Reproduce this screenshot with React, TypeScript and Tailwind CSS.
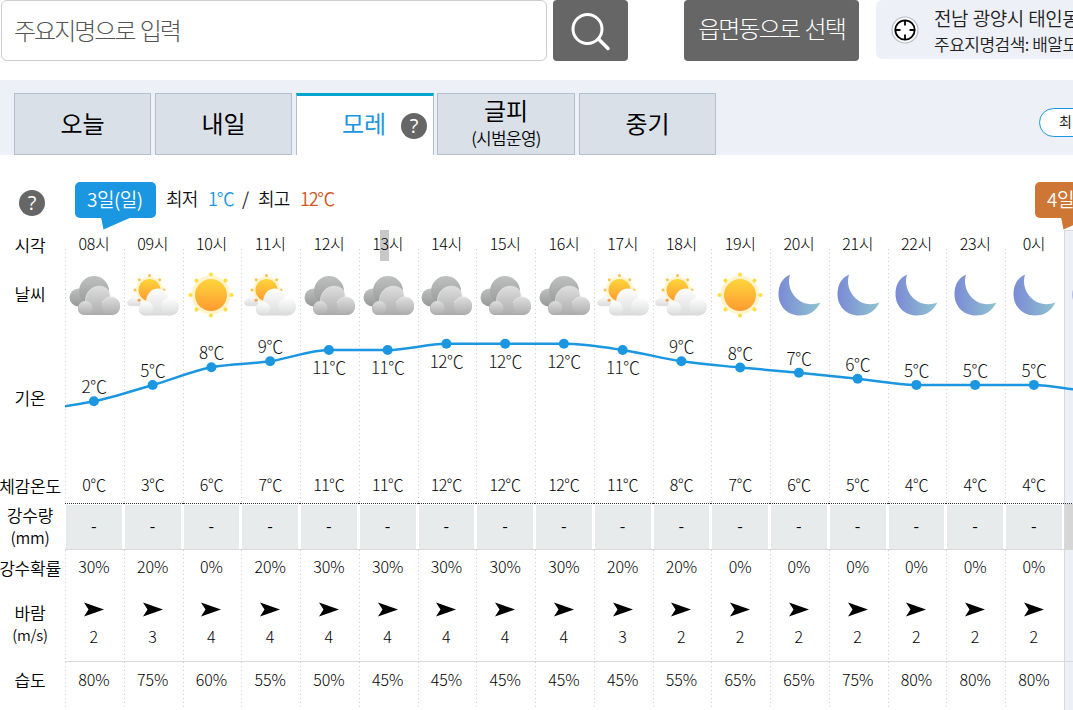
import { ReactNode } from 'react';

type Sky = 'cloudy' | 'partly' | 'sunny' | 'moon';

interface Hour {
  time: string;
  sky: Sky;
  temp: number;
  feels: number;
  rain: number;
  wind: number;
  humidity: number;
  y: number;
  below?: boolean;
}

const hours: Hour[] = [
  { time: '08', sky: 'cloudy', temp: 2, feels: 0, rain: 30, wind: 2, humidity: 80, y: 401.3 },
  { time: '09', sky: 'partly', temp: 5, feels: 3, rain: 20, wind: 3, humidity: 75, y: 385 },
  { time: '10', sky: 'sunny', temp: 8, feels: 6, rain: 0, wind: 4, humidity: 60, y: 367.3 },
  { time: '11', sky: 'partly', temp: 9, feels: 7, rain: 20, wind: 4, humidity: 55, y: 361.3 },
  { time: '12', sky: 'cloudy', temp: 11, feels: 11, rain: 30, wind: 4, humidity: 50, y: 350, below: true },
  { time: '13', sky: 'cloudy', temp: 11, feels: 11, rain: 30, wind: 4, humidity: 45, y: 350, below: true },
  { time: '14', sky: 'cloudy', temp: 12, feels: 12, rain: 30, wind: 4, humidity: 45, y: 343.8, below: true },
  { time: '15', sky: 'cloudy', temp: 12, feels: 12, rain: 30, wind: 4, humidity: 45, y: 343.8, below: true },
  { time: '16', sky: 'cloudy', temp: 12, feels: 12, rain: 30, wind: 4, humidity: 45, y: 343.8, below: true },
  { time: '17', sky: 'partly', temp: 11, feels: 11, rain: 20, wind: 3, humidity: 45, y: 350, below: true },
  { time: '18', sky: 'partly', temp: 9, feels: 8, rain: 20, wind: 2, humidity: 55, y: 361.3 },
  { time: '19', sky: 'sunny', temp: 8, feels: 7, rain: 0, wind: 2, humidity: 65, y: 367.5 },
  { time: '20', sky: 'moon', temp: 7, feels: 6, rain: 0, wind: 2, humidity: 65, y: 372.7 },
  { time: '21', sky: 'moon', temp: 6, feels: 5, rain: 0, wind: 2, humidity: 75, y: 378.8 },
  { time: '22', sky: 'moon', temp: 5, feels: 4, rain: 0, wind: 2, humidity: 80, y: 384.9 },
  { time: '23', sky: 'moon', temp: 5, feels: 4, rain: 0, wind: 2, humidity: 80, y: 384.9 },
  { time: '0', sky: 'moon', temp: 5, feels: 4, rain: 0, wind: 2, humidity: 80, y: 384.9 },
];

const COL = 58.75;
const CHART_TOP = 230;

function Gradients() {
  return (
    <svg className="absolute h-0 w-0">
      <defs>
        <linearGradient id="backCloud" x1="0" y1="0" x2="0" y2="1">
          <stop offset="0" stopColor="#bfc1c1" />
          <stop offset="1" stopColor="#969797" />
        </linearGradient>
        <linearGradient id="frontCloud" x1="0" y1="0" x2="0" y2="1">
          <stop offset="0" stopColor="#dedede" />
          <stop offset="1" stopColor="#acacac" />
        </linearGradient>
        <linearGradient id="whiteCloud" x1="0" y1="0" x2="0" y2="1">
          <stop offset="0" stopColor="#ffffff" />
          <stop offset="1" stopColor="#d9dada" />
        </linearGradient>
        <linearGradient id="sun" x1="0" y1="0" x2="0" y2="1">
          <stop offset="0" stopColor="#fdd63c" />
          <stop offset="1" stopColor="#ff9a31" />
        </linearGradient>
        <linearGradient id="moon" x1="0" y1="0" x2="1" y2="0">
          <stop offset="0" stopColor="#7b8ad6" />
          <stop offset="1" stopColor="#8fc4cf" />
        </linearGradient>
      </defs>
    </svg>
  );
}

const sunRays = [0, 45, 90, 135, 180, 225, 270, 315];

function SkyIcon({ sky }: { sky: Sky }) {
  if (sky === 'cloudy') {
    return (
      <svg width="52" height="44" viewBox="0 0 52 44" className="ml-[2px] block">
        <circle cx="9.500" cy="24.500" r="9" fill="url(#backCloud)" />
        <circle cx="25" cy="18" r="15" fill="url(#backCloud)" />
        <path d="M16 42C6 42 7 28 16.500 28C17 9 42 9 41 24C54 23 54 42 43 42Z" fill="url(#frontCloud)" />
        <path d="M16.500 28C17 9 42 9 41 24" fill="none" stroke="#e6e6e6" strokeWidth="0.700" />
        <circle cx="16.500" cy="35" r="7" fill="url(#frontCloud)" />
        <circle cx="42" cy="33" r="9" fill="url(#frontCloud)" />
        <path d="M33.500 30A9 9 0 0 1 47 25.500" fill="none" stroke="#e8e8e8" strokeWidth="0.900" />
      </svg>
    );
  }
  if (sky === 'partly') {
    return (
      <svg width="52" height="44" viewBox="0 0 52 44" className="block">
        <circle cx="22.500" cy="17" r="13.500" fill="#fff4cc" />
        {sunRays.map((a) => (
          <circle key={a} cx="22.500" cy="2.500" r="1.500" fill="#fbc04a" transform={`rotate(${a} 22.500 17)`} />
        ))}
        <circle cx="22.500" cy="17" r="11" fill="url(#sun)" />
        <path d="M4 33C-1 33-1 26 5 26C6 21 12 22 13 27L16 33Z" fill="url(#whiteCloud)" stroke="#e8e8e8" strokeWidth="0.500" />
        <circle cx="12" cy="27.300" r="1.500" fill="#f9a245" />
        <path d="M19 42.500C9 43 10 29 19 29C20 11 41 12 41 26C55 24 55 42.500 43 42.500Z" fill="url(#whiteCloud)" />
        <circle cx="19" cy="35.500" r="7" fill="url(#whiteCloud)" />
        <circle cx="43" cy="33.500" r="9" fill="url(#whiteCloud)" />
      </svg>
    );
  }
  if (sky === 'sunny') {
    return (
      <svg width="46" height="46" viewBox="0 0 46 46" className="block">
        <circle cx="23" cy="23" r="19.500" fill="#fff4cc" />
        {sunRays.map((a) => (
          <circle key={a} cx="23" cy="2.500" r="2" fill="#ffdd3e" transform={`rotate(${a} 23 23)`} />
        ))}
        <circle cx="23" cy="23" r="16" fill="url(#sun)" />
      </svg>
    );
  }
  return (
    <svg width="44" height="44" viewBox="0 0 44 44" className="block">
      <path d="M13 1.500C8 18 23 37 43.500 29.500C38 40 30 42.500 23 42.500C10 42.500 1.500 33 1.500 21C1.500 11 6 5 13 1.500Z" fill="url(#moon)" />
    </svg>
  );
}

function HelpDot() {
  return (
    <span className="flex h-[26px] w-[26px] shrink-0 items-center justify-center rounded-full bg-[#666] font-['Open_Sans'] text-[20px] leading-none font-normal text-white">
      ?
    </span>
  );
}

function Tab({ children, width }: { children: ReactNode; width: string }) {
  return (
    <div className={`flex h-[62px] shrink-0 flex-col items-center justify-center border border-[#b3bfce] bg-[#d9e0e8] pb-[2px] text-[24px] leading-[30px] font-normal text-black ${width}`}>
      {children}
    </div>
  );
}

function Header() {
  return (
    <div className="flex h-[80px] items-start">
      <div className="ml-px flex h-[61px] w-[546px] shrink-0 items-center rounded-[6px] border border-[#ccc] pb-[2px] pl-[12px] text-[24px] tracking-[-2px] text-[#555] [word-spacing:2px]">
        주요지명으로 입력
      </div>
      <button className="ml-[6px] flex h-[61px] w-[75px] shrink-0 items-center justify-center rounded-[4px] bg-[#666]">
        <svg width="42" height="42" viewBox="0 0 42 42" fill="none" stroke="white">
          <circle cx="17.500" cy="19" r="14.500" strokeWidth="3" />
          <path d="M28.500 29L38 38.500" strokeWidth="3.500" strokeLinecap="round" />
        </svg>
      </button>
      <button className="ml-[56px] h-[61px] w-[175px] shrink-0 rounded-[4px] bg-[#666] pb-[6px] text-[24px] tracking-[-1.900px] whitespace-nowrap text-white [word-spacing:2px]">
        읍면동으로 선택
      </button>
      <div className="ml-[17px] flex h-[59px] w-[220px] shrink-0 items-center rounded-l-[6px] bg-[#edf0f6] pl-[14px]">
        <svg width="30" height="30" viewBox="0 0 30 30" className="shrink-0" fill="none">
          <circle cx="15" cy="15" r="13" fill="white" stroke="#b9bec9" strokeWidth="1.200" />
          <circle cx="15" cy="15" r="9.700" stroke="black" strokeWidth="1.800" />
          <path d="M15 5V10.500M15 19.500V25M5 15H10.500M19.500 15H25" stroke="black" strokeWidth="1.800" />
        </svg>
        <div className="ml-[14px] pt-[3px] font-[350] whitespace-nowrap text-[#222]">
          <div className="text-[19px] leading-[26px] tracking-[-0.500px] [word-spacing:1px]">전남 광양시 태인동</div>
          <div className="text-[17px] leading-[26px] tracking-[-0.500px]">주요지명검색: 배알도</div>
        </div>
      </div>
    </div>
  );
}

function Tabs() {
  return (
    <div className="flex h-[75px] items-start bg-[#edf0f6] pt-[13px] pl-[14px]">
      <Tab width="w-[137px]">오늘</Tab>
      <Tab width="ml-[4px] w-[137px]">내일</Tab>
      <div className="ml-[4px] flex h-[62px] w-[138px] shrink-0 items-center border-x border-t-[3px] border-x-[#b3bfce] border-t-[#06a5cf] bg-white pr-[6px] pl-[45px] text-[24px] font-normal text-[#1b96e0]">
        <span className="flex-1 pb-[5px]">모레</span>
        <HelpDot />
      </div>
      <Tab width="ml-[3px] w-[138px]">
        글피
        <span className="text-[17px] leading-[26px] font-[350] tracking-[-0.700px]">(시범운영)</span>
      </Tab>
      <Tab width="ml-[4px] w-[137px]">중기</Tab>
      <div className="mt-[15px] ml-[323px] h-[29px] w-[120px] shrink-0 rounded-full border border-[#1b96e0] bg-white pl-[19px] text-[14px] leading-[25px] font-normal text-[#222]">
        최
      </div>
    </div>
  );
}

function DayTag({ color, children }: { color: string; children: ReactNode }) {
  return (
    <div className="relative h-[36px] w-[81px] shrink-0 pl-[12px] text-[19px] leading-[33px] font-[350] tracking-[-0.500px] whitespace-nowrap text-white">
      <svg className="absolute top-0 left-0" width="81" height="48" fill={color}>
        <rect width="81" height="36" rx="5" />
        <path d="M26 35L28.500 47.500L57 35Z" />
      </svg>
      <span className="relative">{children}</span>
    </div>
  );
}

function DayHeader() {
  return (
    <div className="flex h-[48px] items-start">
      <div className="mt-[8px] ml-[19px]">
        <HelpDot />
      </div>
      <div className="ml-[30px] flex">
        <DayTag color="#1b96e0">3일(일)</DayTag>
      </div>
      <div className="ml-[10px] flex w-[869px] shrink-0 text-[18px] leading-[32px] font-[350] tracking-[-0.700px] whitespace-pre text-[#111]">
        <span className="w-[42px]">최저</span>
        <span className="w-[34px] tracking-[-1.200px] text-[#1b96e0]">1℃</span>
        <span className="w-[16px]">/</span>
        <span className="w-[42px]">최고</span>
        <span className="tracking-[-1.200px] text-[#d0561c]">12℃</span>
      </div>
      <DayTag color="#ce7636">4일(월)</DayTag>
    </div>
  );
}

function Labels() {
  return (
    <div className="flex w-[65px] shrink-0 flex-col items-start text-center text-[17px] leading-[22px] font-[350] tracking-[-0.200px] whitespace-nowrap text-black">
      <div className="flex h-[29px] w-[60px] items-center justify-center">시각</div>
      <div className="flex h-[69px] w-[60px] items-center justify-center">날씨</div>
      <div className="flex h-[140px] w-[60px] items-center justify-center">기온</div>
      <div className="flex h-[35px] w-[60px] items-center justify-center">체감온도</div>
      <div className="flex h-[46px] w-[60px] flex-col items-center justify-center">
        강수량<span className="text-[16px]">(mm)</span>
      </div>
      <div className="flex h-[37px] w-[60px] items-center justify-center">강수확률</div>
      <div className="flex h-[75px] w-[60px] flex-col items-center justify-center">
        바람<span className="text-[15px]">(m/s)</span>
      </div>
      <div className="flex h-[38px] w-[60px] items-center justify-center">습도</div>
    </div>
  );
}

const dots = 'bg-[repeating-linear-gradient(to_bottom,#ccc_0_1px,transparent_1px_4px)]';

function HourColumn({ hour }: { hour: Hour }) {
  const [first, second] = hour.time;
  return (
    <div className="relative w-[58.75px] shrink-0 text-center text-[16px] text-black">
      <div className={`absolute top-[19px] left-0 h-[254px] w-px ${dots}`} />
      <div className={`absolute top-[320px] left-0 h-[160px] w-px ${dots}`} />
      <div className="h-[32px] pr-px leading-[26px] tracking-[-0.400px]">
        {hour.time === '13' ? (
          <>
            {first}
            <span className="bg-[#c8c8c8] pt-[5px] pb-[6px]">{second}</span>
          </>
        ) : (
          hour.time
        )}
        시
      </div>
      <div className="flex h-[66px] items-center justify-center pr-px">
        <SkyIcon sky={hour.sky} />
      </div>
      <div className="h-[139px]" />
      <div className="h-[36px] pr-px leading-[35px] tracking-[-0.700px]">{hour.feels}℃</div>
      <div className="flex h-[46px] items-center justify-center border-t border-dotted border-[#333] pt-px pr-[2px] pl-px">
        <span className="flex h-full w-full items-center justify-center bg-[#e8ebec] pb-[5px] font-normal text-black">-</span>
      </div>
      <div className="h-[38px] border-t border-[#d9d9d9] pr-px leading-[33px]">{hour.rain}%</div>
      <div className="flex h-[74px] flex-col items-center pt-[15px] pr-px">
        <svg width="20" height="15" viewBox="0 0 20 15">
          <path d="M0 0.500L20 7.500L0 14.500L4.500 7.500Z" fill="black" />
        </svg>
        <div className="pt-[6px] leading-[26px]">{hour.wind}</div>
      </div>
      <div className="h-[49px] border-t border-[#d9d9d9] pr-px leading-[34px]">{hour.humidity}%</div>
    </div>
  );
}

function NextDayColumn() {
  return (
    <div className="w-[60px] shrink-0 border-t border-l border-[#d5d8dc] bg-[#edf0f6]">
      <div className="flex h-[97px] items-center pt-[32px] pl-[6px]">
        <SkyIcon sky="moon" />
      </div>
      <div className="h-[175px]" />
      <div className="h-[46px] border-t border-dotted border-[#333] bg-[#d6d6d6] bg-clip-padding" />
      <div className="h-[112px] border-t border-[#d9d9d9]" />
      <div className="border-t border-[#d9d9d9]" />
    </div>
  );
}

function TempChart() {
  const points = hours.map((h, i) => ({ x: 28.9 + i * COL, y: h.y - CHART_TOP }));
  const all = [{ x: -29.8, y: 178.5 }, ...points, { x: 1027.6, y: 161 }];
  const line = all
    .slice(1)
    .map((p, i) => {
      const a = all[i];
      const before = all[i - 1] ?? a;
      const after = all[i + 2] ?? p;
      const flat = a.y === p.y;
      const ca = flat || before.y === a.y ? 0 : (p.y - before.y) / 6;
      const cb = flat || after.y === p.y ? 0 : (after.y - a.y) / 6;
      return `C${a.x + COL / 3} ${a.y + ca} ${p.x - COL / 3} ${p.y - cb} ${p.x} ${p.y}`;
    })
    .join('');

  return (
    <svg className="pointer-events-none absolute top-0 left-0" width="1008" height="250">
      <path d={`M${all[0].x} ${all[0].y}${line}`} fill="none" stroke="#1b96e0" strokeWidth="2.500" />
      {points.map((p, i) => (
        <g key={hours[i].time}>
          <circle cx={p.x} cy={p.y} r="5" fill="#1b96e0" />
          <text
            x={p.x}
            y={p.y + (hours[i].below ? 24 : -8)}
            textAnchor="middle"
            fill="#111"
            className="text-[17px] tracking-[-0.700px]"
          >
            {hours[i].temp}℃
          </text>
        </g>
      ))}
    </svg>
  );
}

export default function App() {
  return (
    <div className="h-[710px] w-[1073px] overflow-hidden bg-white font-['Noto_Sans_CJK_KR',sans-serif] font-light">
      <Gradients />
      <Header />
      <Tabs />
      <div className="pt-[27px]">
        <DayHeader />
        <div className="flex h-[480px]">
          <Labels />
          <div className="relative flex h-[480px] w-[1008px] overflow-hidden">
            {hours.map((hour) => (
              <HourColumn key={hour.time} hour={hour} />
            ))}
            <NextDayColumn />
            <TempChart />
          </div>
        </div>
      </div>
    </div>
  );
}
